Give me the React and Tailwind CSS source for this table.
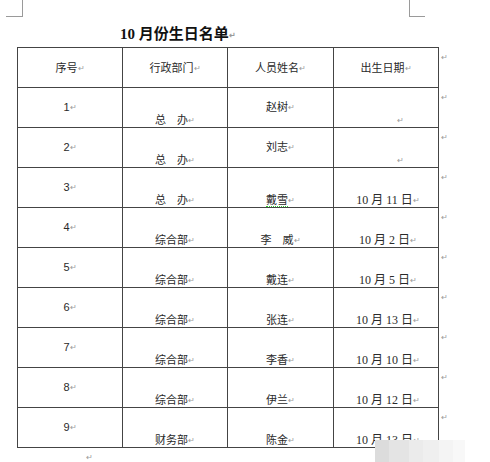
import React from 'react';

const ROWS = [
  { no: '1', dept: '总　办', name: '赵树', nameLow: false, date: null },
  { no: '2', dept: '总　办', name: '刘志', nameLow: false, date: null },
  { no: '3', dept: '总　办', name: '戴雪', nameLow: true, date: '10 月 11 日', squiggle: true },
  { no: '4', dept: '综合部', name: '李　威', nameLow: true, date: '10 月 2 日' },
  { no: '5', dept: '综合部', name: '戴连', nameLow: true, date: '10 月 5 日' },
  { no: '6', dept: '综合部', name: '张连', nameLow: true, date: '10 月 13 日' },
  { no: '7', dept: '综合部', name: '李香', nameLow: true, date: '10 月 10 日' },
  { no: '8', dept: '综合部', name: '伊兰', nameLow: true, date: '10 月 12 日' },
  { no: '9', dept: '财务部', name: '陈金', nameLow: true, date: '10 月 13 日' },
];

const HEADERS = ['序号', '行政部门', '人员姓名', '出生日期'];

const SERIF = { fontFamily: '"Liberation Serif", "Noto Sans CJK SC", serif' };

function Mark() {
  return <span className="text-[8px] text-[#9a9a9a] leading-none align-middle">↵</span>;
}

function Cell({ top, bottom }) {
  return (
    <div className="h-[40px] border-b border-r border-[#444] pt-[13px] flex flex-col items-center">
      <div className="h-[13px] leading-[13px] whitespace-pre">{top}</div>
      <div className="h-[13px] leading-[13px] whitespace-pre">{bottom}</div>
    </div>
  );
}

export default function App() {
  return (
    <div
      className="relative w-[490px] h-[462px] bg-white overflow-hidden text-[#2a2a2a]"
      style={{ fontFamily: '"Liberation Sans", "Noto Sans CJK SC", sans-serif' }}
    >
      {/* page corner marks */}
      <div className="absolute left-[6px] top-0 w-[17px] h-[17px] border-r border-b border-[#9a9a9a]" />
      <div className="absolute left-[409px] top-0 w-[16px] h-[17px] border-l border-b border-[#9a9a9a]" />

      <div className="pt-[24px] pl-[120px] h-[47px]">
        <div className="text-[15px] font-bold leading-[20px] text-[#111]" style={SERIF}>
          10 月份生日名单<Mark />
        </div>
      </div>

      <div className="flex pl-[17px]">
        <div className="w-[422px] border-l border-t border-[#444] grid grid-cols-[105px_105px_106px_105px] text-[11px]">
          {HEADERS.map(h => (
            <div key={h} className="h-[40px] border-b border-r border-[#444] pt-[14px] text-center leading-[13px]">
              {h}<Mark />
            </div>
          ))}
          {ROWS.map(row => (
            <React.Fragment key={row.no}>
              <Cell top={<>{row.no}<Mark /></>} bottom="" />
              <Cell top="" bottom={<>{row.dept}<Mark /></>} />
              <Cell
                top={row.nameLow ? '' : <>{row.name}<Mark /></>}
                bottom={row.nameLow ? (
                  <>
                    <span className={row.squiggle ? 'border-b border-dotted border-[#3c3]' : ''}>{row.name}</span>
                    <Mark />
                  </>
                ) : ''}
              />
              <div className="h-[40px] border-b border-r border-[#444] pt-[13px] flex flex-col items-center">
                <div className="h-[13px]" />
                {row.date ? (
                  <div className="h-[13px] leading-[13px] pl-[4px] text-[12px]" style={SERIF}>{row.date}<Mark /></div>
                ) : (
                  <div className="h-[13px] leading-[13px] pl-[28px]"><Mark /></div>
                )}
              </div>
            </React.Fragment>
          ))}
        </div>
        <div className="flex flex-col pl-[2px]">
          {Array.from({ length: 10 }).map((_, i) => (
            <div key={i} className="h-[40px] pt-[2px] leading-none">
              <Mark />
            </div>
          ))}
        </div>
      </div>

      <div className="pl-[86px] pt-[1px] leading-none">
        <Mark />
      </div>

      {/* blurred watermark */}
      <div className="absolute left-[375px] top-[440px] flex h-[22px]">
        <div className="w-[14px] bg-[#dcdcdc]" />
        <div className="w-[20px] bg-[#e4e4e4]" />
        <div className="w-[14px] bg-[#ebebeb]" />
        <div className="w-[16px] bg-[#efefef]" />
        <div className="w-[14px] bg-[#f4f4f4]" />
        <div className="w-[12px] bg-[#f8f8f8]" />
      </div>
    </div>
  );
}
